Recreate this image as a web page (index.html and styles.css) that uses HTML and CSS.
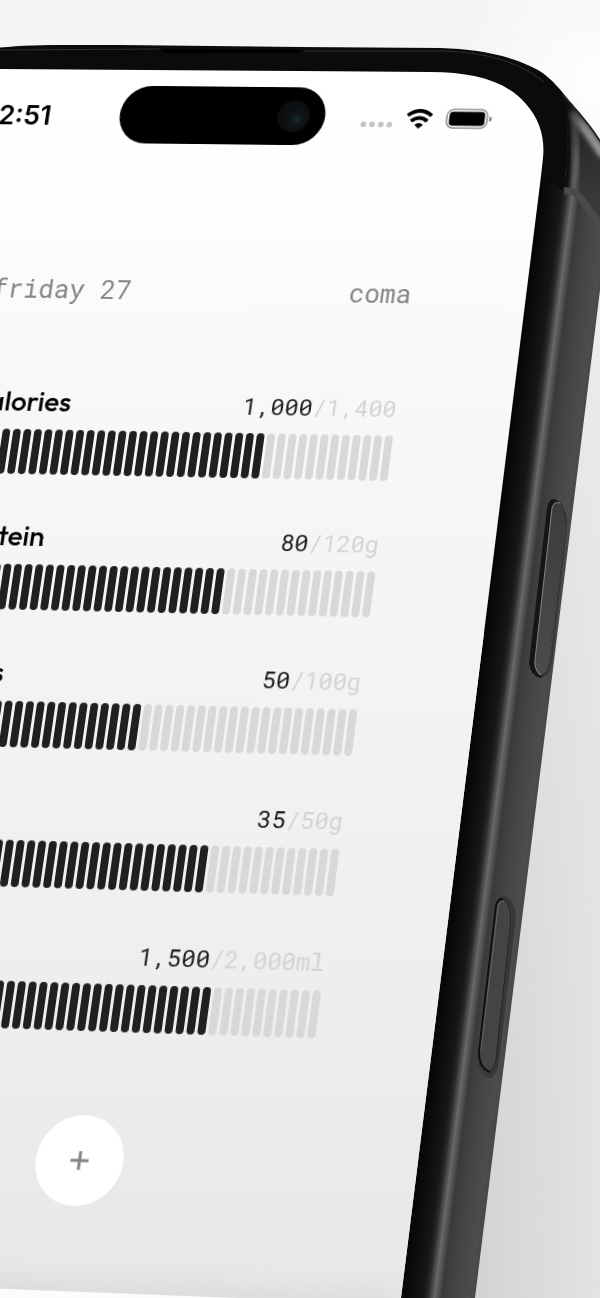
FILE: index.html
```html
<!DOCTYPE html>
<html lang="en">
<head>
  <meta charset="UTF-8">
  <meta name="viewport" content="width=device-width, initial-scale=1.0">
  <title>coma</title>
  <link rel="stylesheet" href="styles.css">
</head>
<body>
  <div class="scene">
    <svg class="phone" viewBox="0 0 600 1298" width="600" height="1298" aria-hidden="true">
      <defs>
        <linearGradient id="rail" gradientUnits="userSpaceOnUse" x1="470" y1="750" x2="542" y2="759">
          <stop offset="0" stop-color="#060606"/>
          <stop offset=".12" stop-color="#0c0c0c"/>
          <stop offset=".3" stop-color="#171717"/>
          <stop offset=".36" stop-color="#2a2a2a"/>
          <stop offset=".45" stop-color="#686868"/>
          <stop offset=".55" stop-color="#3a3a3a"/>
          <stop offset=".7" stop-color="#444"/>
          <stop offset=".93" stop-color="#4c4c4c"/>
          <stop offset="1" stop-color="#484848"/>
        </linearGradient>
        <linearGradient id="corner" gradientUnits="userSpaceOnUse" x1="572" y1="100" x2="584" y2="200">
          <stop offset="0" stop-color="#0b0b0b"/>
          <stop offset=".3" stop-color="#262626"/>
          <stop offset="1" stop-color="#3a3a3a"/>
        </linearGradient>
        <linearGradient id="edgeLight" gradientUnits="userSpaceOnUse" x1="570" y1="102" x2="574" y2="160">
          <stop offset="0" stop-color="#666" stop-opacity="0"/>
          <stop offset="1" stop-color="#6c6c6c"/>
        </linearGradient>
        <linearGradient id="gloss" gradientUnits="userSpaceOnUse" x1="570" y1="106" x2="600" y2="150">
          <stop offset="0" stop-color="#888" stop-opacity="0"/>
          <stop offset=".5" stop-color="#8a8a8a"/>
          <stop offset="1" stop-color="#959595"/>
        </linearGradient>
        <filter id="soft" x="-50%" y="-20%" width="200%" height="140%">
          <feGaussianBlur stdDeviation="2"/>
        </filter>
        <clipPath id="cornerClip">
          <path d="M562 93L572 104C584 117 594 130 602 143V232L577 195L563 192C569 160 570 120 562 93Z"/>
        </clipPath>
        <linearGradient id="glass" x1="0" y1="0" x2="0" y2="1">
          <stop offset="0" stop-color="#fff"/>
          <stop offset=".1" stop-color="#fdfefe"/>
          <stop offset=".25" stop-color="#f8f8f8"/>
          <stop offset=".5" stop-color="#f3f3f3"/>
          <stop offset=".75" stop-color="#eeeeee"/>
          <stop offset="1" stop-color="#e7e7e7"/>
        </linearGradient>
        <linearGradient id="key" x1="0" y1="0" x2="0" y2="1">
          <stop offset="0" stop-color="#3c3c3c"/>
          <stop offset="1" stop-color="#4c4c4c"/>
        </linearGradient>
      </defs>

      <!-- body and side rail -->
      <path fill="#0b0b0b" d="M-10 49C20 44 60 45 120 45L300 47L440 48C480 49 512 56 538 70C553 79 562 92 572 104L590 128L566 170L560 300L500 700L380 180L-10 140Z"/>
      <path fill="url(#rail)" d="M541 176L564 192L577 194L602 230V274L475 1298H401Z"/>
      <g clip-path="url(#cornerClip)">
        <path fill="url(#corner)" d="M556 80H604V240H556Z"/>
        <path fill="none" stroke="#0f0f0f" stroke-width="10" filter="url(#soft)" d="M561 92C568 120 569 155 564 196"/>
        <path fill="none" stroke="url(#edgeLight)" stroke-width="5" filter="url(#soft)" d="M570 100C578 130 578 160 572 202"/>
        <path fill="none" stroke="url(#gloss)" stroke-width="9" filter="url(#soft)" d="M572 112C582 124 592 138 604 156"/>
        <path fill="none" stroke="#242424" stroke-width="3" d="M562 93L572 104C584 117 594 130 602 143"/>
      </g>
      <path fill="none" stroke="#303030" d="M0 50L160 49M304 51L436 51C480 51 516 60 544 82"/>
      <path fill="#000" d="M162 49L302 50L300 53L166 53Z"/>
      <path fill="none" stroke="#4a4a4a" stroke-width="7" d="M564 191C573 190 578 194 583 201L602 227"/>

      <!-- display -->
      <path fill="url(#glass)" d="M-10 69L300 71L430 72C475 72 508 82 526 104C540 120 545 138 543 158L541 176L401 1298H-10Z"/>

      <!-- side button -->
      <path fill="#161616" d="M547 508Q549 498 554 499Q564 502 565 515Q565 520 564 526L549 662Q547 676 540 678Q530 675 529 663Z"/>
      <path fill="url(#key)" d="M552 508Q554 500 560 503Q565 508 565 518L549 662Q547 674 541 676Q534 672 535 660Z"/>
      <path fill="none" stroke="#858585" d="M560 503Q554 501 552 508L535 660Q534 670 541 675"/>
      <path fill="none" stroke="#363636" stroke-width="2" d="M565 512Q567 520 566 528L551 662Q549 672 545 676"/>

      <!-- camera control -->
      <path fill="#383838" d="M496 905Q498 895 503 895Q515 900 516 917L499 1062Q497 1075 491 1078Q479 1076 477 1060Z"/>
      <path fill="#444" d="M496 906Q498 898 503 899Q512 905 512 920L496 1060Q494 1072 488 1072Q479 1068 479 1052Z"/>
      <path fill="none" stroke="#232323" d="M503 899Q511 905 511 920L496 1060Q494 1070 490 1071"/>
      <path fill="none" stroke="#101010" stroke-width="2" d="M503 899Q498 898 496 906L479 1052Q479 1068 490 1072"/>
      <path fill="none" stroke="#646464" d="M481 1050L498 907Q500 900 504 902"/>
    </svg>

    <div class="screen">
      <div class="status-bar">
        <span class="time">12:51</span>
        <div class="island"><i class="lens"></i></div>
        <div class="status-icons">
          <svg width="34" height="21" viewBox="0 0 34 21" fill="#c4c4c4" aria-hidden="true">
            <circle cx="4" cy="17" r="3"/><circle cx="13" cy="17" r="3"/><circle cx="22" cy="17" r="3"/><circle cx="31" cy="17" r="3"/>
          </svg>
          <svg width="29" height="21" viewBox="0 0 29 21" fill="none" stroke="#000" stroke-width="4" aria-hidden="true">
            <path d="M2 7Q14.500 -3 27 7"/>
            <path d="M6 13Q14.500 6 23 13"/>
            <path fill="#000" stroke="none" d="M10 17Q14.500 13 19 17L14.500 21Z"/>
          </svg>
          <svg width="48" height="22" viewBox="0 0 48 22" aria-hidden="true">
            <rect x="1" y="1" width="42" height="20" rx="7" fill="none" stroke="#8c8c8c" stroke-width="1.500"/>
            <rect x="3.500" y="3.500" width="37" height="15" rx="4"/>
            <path fill="#8c8c8c" d="M45 8Q48 9 48 11Q48 13 45 14Z"/>
          </svg>
        </div>
      </div>

      <div class="content">
        <div class="header">
          <span>friday 27</span>
          <span>coma</span>
        </div>

        <div class="goals">
          <div class="goal" data-filled="28">
            <div class="goal-head"><h2>calories</h2><p>1,000<span>/1,400</span></p></div>
            <div class="bars"></div>
          </div>
          <div class="goal" data-filled="26">
            <div class="goal-head"><h2>protein</h2><p>80<span>/120g</span></p></div>
            <div class="bars"></div>
          </div>
          <div class="goal" data-filled="20">
            <div class="goal-head"><h2>carbs</h2><p>50<span>/100g</span></p></div>
            <div class="bars"></div>
          </div>
          <div class="goal" data-filled="28">
            <div class="goal-head"><h2>fat</h2><p>35<span>/50g</span></p></div>
            <div class="bars"></div>
          </div>
          <div class="goal" data-filled="30">
            <div class="goal-head"><h2>water</h2><p>1,500<span>/2,000ml</span></p></div>
            <div class="bars"></div>
          </div>
        </div>

        <button class="add" type="button" aria-label="Add">
          <svg width="20" height="20" viewBox="0 0 20 20" fill="none" stroke="#858585" stroke-width="3" aria-hidden="true">
            <path d="M1 10H19M10 1V19"/>
          </svg>
        </button>
      </div>

      <div class="sheet"></div>
    </div>
  </div>

  <script>
    const BAR_COUNT = 40;

    document.querySelectorAll('.goal').forEach(goal => {
      const bars = goal.querySelector('.bars');
      const filled = Number(goal.dataset.filled);
      for (let i = 0; i < BAR_COUNT; i++) {
        const bar = document.createElement('i');
        bar.className = i < filled ? 'bar filled' : 'bar';
        bars.appendChild(bar);
      }
    });
  </script>
</body>
</html>
```

FILE: styles.css
```css
* {
  box-sizing: border-box;
}
body {
  margin: 0;
  font-family: Inter, sans-serif;
  color: #000;
}
.scene {
  position: relative;
  min-height: 100vh;
  overflow: hidden;
  background:
    radial-gradient(circle at 600px 80px, #fff, rgba(255, 255, 255, 0) 140px),
    linear-gradient(97deg, rgba(0, 0, 0, 0) 70%, rgba(0, 0, 0, 0.02) 84%, rgba(255, 255, 255, 0.3) 100%),
    linear-gradient(#f5f5f5, #f2f2f2 20%, #e8e8e8 45%, #dedede 75%, #d7d7d7);
}
.phone {
  display: block;
}

/* the display is laid out flat, then tilted into the phone */
.screen {
  position: absolute;
  top: 0;
  left: 0;
  width: 673px;
  transform-origin: 0 0;
  transform: matrix3d(0.93634, 0.00707, 0, -0.0000228, -0.13957, 0.9149, 0, -0.00004646, 0, 0, 1, 0, -85, 68, 0, 1);
}
.status-bar {
  display: grid;
  grid-template-columns: 1fr 216px 1fr;
  align-items: center;
  padding: 17px 58px 0 51px;
}
.time {
  padding: 4px 0 0 34px;
  font-size: 28px;
  line-height: 32px;
  font-weight: 600;
}
.island {
  display: flex;
  align-items: center;
  justify-content: flex-end;
  height: 62px;
  padding-right: 16px;
  border-radius: 31px;
  background: #000;
}
.lens {
  width: 34px;
  height: 34px;
  border-radius: 50%;
  background: radial-gradient(circle at 60% 60%, #12332c 0, #10181a 16%, #0d0f11 45%, #0a0b0c 100%);
}
.status-icons {
  display: flex;
  justify-content: flex-end;
  align-items: center;
  gap: 13px;
  padding-top: 2px;
}

.content {
  display: flex;
  flex-direction: column;
  padding: 140px 118px 82px;
}
.header {
  display: flex;
  justify-content: space-between;
  margin-bottom: 87px;
  font-family: "Roboto Mono", "Liberation Mono", monospace;
  font-size: 27px;
  line-height: 32px;
  color: #868686;
}
.goals {
  display: flex;
  flex-direction: column;
  gap: 48px;
}
.goal-head {
  display: flex;
  justify-content: space-between;
  align-items: baseline;
  height: 32px;
  margin-bottom: 13px;
}
.goal-head h2 {
  margin: 0;
  font-family: Outfit, Lato, sans-serif;
  font-size: 29px;
  line-height: 32px;
  font-weight: 500;
}
.goal-head p {
  margin: 0;
  font-family: "Roboto Mono", "Liberation Mono", monospace;
  font-size: 24px;
  line-height: 32px;
  color: #1c1c1c;
}
.goal-head span {
  color: #d3d3d3;
}
.bars {
  display: flex;
  gap: 3px;
}
.bar {
  flex: 1;
  height: 47px;
  border-radius: 4px;
  background: #d8d8d9;
}
.bar.filled {
  background: #202020;
}
.add {
  display: flex;
  align-items: center;
  justify-content: center;
  align-self: center;
  width: 88px;
  height: 88px;
  margin-top: 82px;
  padding: 0;
  border: none;
  border-radius: 50%;
  background: #fff;
  cursor: pointer;
}
.sheet {
  height: 200px;
  background: #fcfcfc;
  box-shadow: 0 -8px 30px rgba(0, 0, 0, 0.06);
}
```
